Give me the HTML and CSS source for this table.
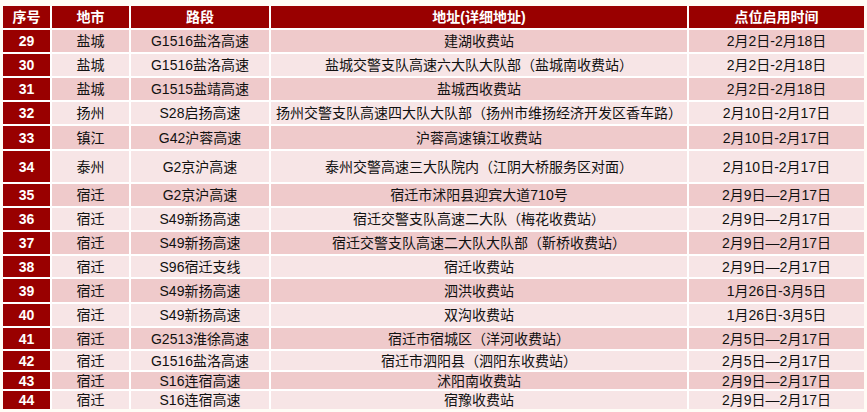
FILE: index.html
```html
<!DOCTYPE html>
<html lang="zh-CN">
<head>
<meta charset="utf-8">
<title>点位表</title>
<link rel="stylesheet" href="styles.css">
</head>
<body>
<table class="sheet">
  <colgroup>
    <col class="c-no"><col class="c-city"><col class="c-road"><col class="c-addr"><col class="c-date">
  </colgroup>
  <thead>
    <tr class="head"><th>序号</th><th>地市</th><th>路段</th><th>地址(详细地址)</th><th>点位启用时间</th></tr>
  </thead>
  <tbody>
    <tr class="odd h24"><td class="no">29</td><td>盐城</td><td>G1516盐洛高速</td><td>建湖收费站</td><td>2月2日-2月18日</td></tr>
    <tr class="even h24"><td class="no">30</td><td>盐城</td><td>G1516盐洛高速</td><td>盐城交警支队高速六大队大队部（盐城南收费站）</td><td>2月2日-2月18日</td></tr>
    <tr class="odd h24"><td class="no">31</td><td>盐城</td><td>G1515盐靖高速</td><td>盐城西收费站</td><td>2月2日-2月18日</td></tr>
    <tr class="even h24"><td class="no">32</td><td>扬州</td><td>S28启扬高速</td><td>扬州交警支队高速四大队大队部（扬州市维扬经济开发区香车路）</td><td>2月10日-2月17日</td></tr>
    <tr class="odd h25"><td class="no">33</td><td>镇江</td><td>G42沪蓉高速</td><td>沪蓉高速镇江收费站</td><td>2月10日-2月17日</td></tr>
    <tr class="even h33"><td class="no">34</td><td>泰州</td><td>G2京沪高速</td><td>泰州交警高速三大队院内（江阴大桥服务区对面）</td><td>2月10日-2月17日</td></tr>
    <tr class="odd h24"><td class="no">35</td><td>宿迁</td><td>G2京沪高速</td><td>宿迁市沭阳县迎宾大道710号</td><td>2月9日—2月17日</td></tr>
    <tr class="even h24"><td class="no">36</td><td>宿迁</td><td>S49新扬高速</td><td>宿迁交警支队高速二大队（梅花收费站）</td><td>2月9日—2月17日</td></tr>
    <tr class="odd h24"><td class="no">37</td><td>宿迁</td><td>S49新扬高速</td><td>宿迁交警支队高速二大队大队部（靳桥收费站）</td><td>2月9日—2月17日</td></tr>
    <tr class="even h23"><td class="no">38</td><td>宿迁</td><td>S96宿迁支线</td><td>宿迁收费站</td><td>2月9日—2月17日</td></tr>
    <tr class="odd h25"><td class="no">39</td><td>宿迁</td><td>S49新扬高速</td><td>泗洪收费站</td><td>1月26日-3月5日</td></tr>
    <tr class="even h24"><td class="no">40</td><td>宿迁</td><td>S49新扬高速</td><td>双沟收费站</td><td>1月26日-3月5日</td></tr>
    <tr class="odd h23"><td class="no">41</td><td>宿迁</td><td>G2513淮徐高速</td><td>宿迁市宿城区（洋河收费站）</td><td>2月5日—2月17日</td></tr>
    <tr class="even h21"><td class="no">42</td><td>宿迁</td><td>G1516盐洛高速</td><td>宿迁市泗阳县（泗阳东收费站）</td><td>2月5日—2月17日</td></tr>
    <tr class="odd h19"><td class="no">43</td><td>宿迁</td><td>S16连宿高速</td><td>沭阳南收费站</td><td>2月9日—2月17日</td></tr>
    <tr class="even h19"><td class="no">44</td><td>宿迁</td><td>S16连宿高速</td><td>宿豫收费站</td><td>2月9日—2月17日</td></tr>
  </tbody>
</table>
</body>
</html>
```

FILE: styles.css
```css
html, body {
  margin: 0;
  padding: 0;
  background: #fffcf6;
}
body {
  padding: 6px 3px 0 3px;
  font-family: "Liberation Sans", "Noto Sans CJK SC", sans-serif;
  color: #111;
}
.sheet {
  border-collapse: collapse;
  border-style: hidden;
  table-layout: fixed;
  width: 861px;
}
.c-no { width: 48px; }
.c-city { width: 79px; }
.c-road { width: 140px; }
.c-addr { width: 418px; }
.c-date { width: 176px; }

.sheet th, .sheet td {
  border: 2px solid #ffffff;
  padding: 0;
  text-align: center;
  vertical-align: middle;
  font-size: 14px;
  line-height: 16px;
  white-space: nowrap;
  overflow: hidden;
}
.sheet th {
  background: #990000;
  color: #ffffff;
  font-weight: bold;
  height: 22px;
}
.head { height: 22px; }
.odd td { background: #efcacb; }
.even td { background: #f7e5e6; }
.sheet td.no {
  background: #990000;
  color: #ffffff;
  font-weight: bold;
}
.h19 { height: 19px; }
.h21 { height: 21px; }
.h23 { height: 23px; }
.h24 { height: 24px; }
.h25 { height: 25px; }
.h33 { height: 33px; }
```
